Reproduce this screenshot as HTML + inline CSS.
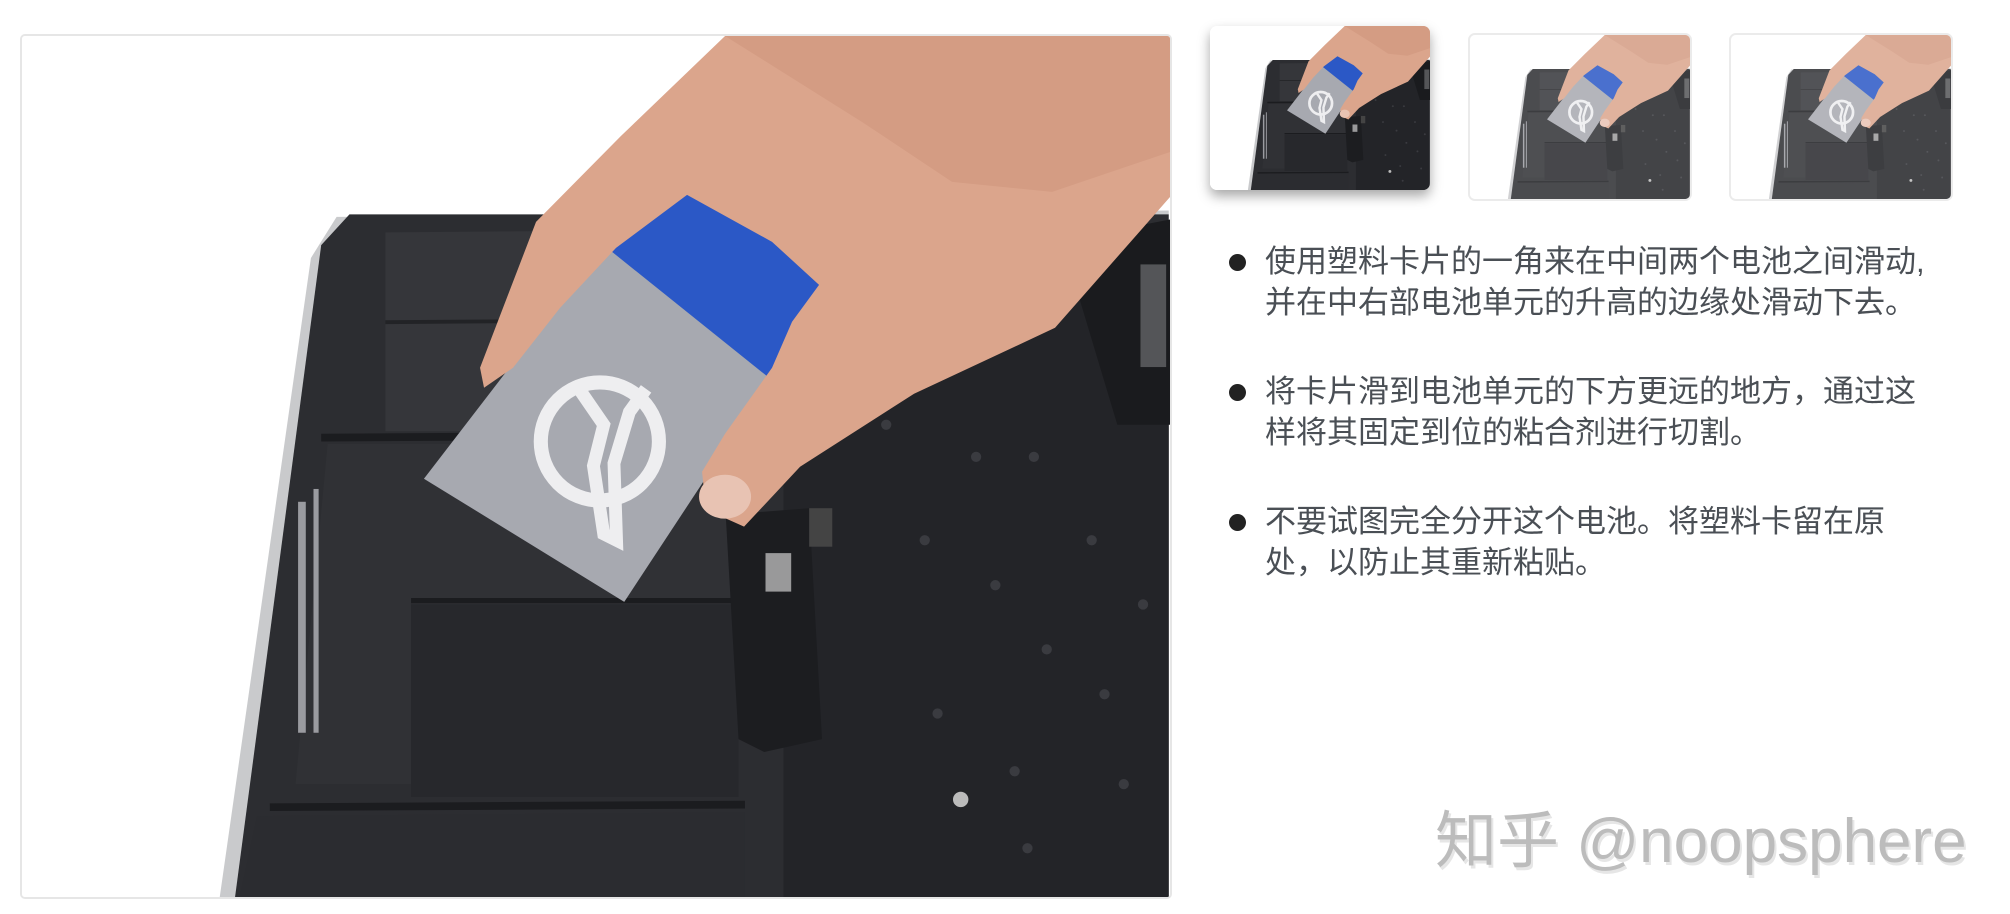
<!DOCTYPE html>
<html><head><meta charset="utf-8"><style>
html,body{margin:0;padding:0;background:#fff;width:2010px;height:914px;overflow:hidden;position:relative;font-family:"Liberation Sans","Noto Sans CJK SC",sans-serif}
.frame{position:absolute;left:20px;top:34px;width:1148px;height:861px;border:2px solid #e6e6e6;border-radius:5px;overflow:hidden;background:#fff}
.thumb{position:absolute;width:220px;height:164px;border-radius:7px;overflow:hidden;background:#fff}
.t1{left:1210px;top:26px;box-shadow:0 6px 12px rgba(0,0,0,.35)}
.t2{left:1468px;top:33px;border:2px solid #e8e8e8;opacity:.85}
.t3{left:1729px;top:33px;border:2px solid #e8e8e8;opacity:.85}
svg{display:block}
ul{position:absolute;left:1265px;top:241px;margin:0;padding:0;list-style:none;color:#4a4f55;font-size:31px;line-height:41px;font-family:"Liberation Sans","Noto Sans CJK SC",sans-serif}
li{position:relative;margin-bottom:48px;white-space:nowrap}
li:before{content:"";position:absolute;left:-36px;top:13px;width:17px;height:17px;border-radius:50%;background:#222}
.wm{position:absolute;left:1435px;top:790px;font-size:62px;color:#bcbcbc;text-shadow:2px 3px 0 #e6e6e6;font-family:"Liberation Sans","Noto Sans CJK SC",sans-serif;white-space:nowrap}
</style></head><body>
<svg width="0" height="0" style="position:absolute">
<defs>
<g id="ph">
<rect x="0" y="0" width="1550" height="705" fill="#fff"/>
<polygon points="262,168 910,163 910,705 170,705 242,200" fill="#c9cacc"/>
<polygon points="272,166 910,166 910,705 182,705 250,190" fill="#2c2d31"/>
<polygon points="300,180 575,178 575,335 300,335" fill="#35363a"/>
<polygon points="255,345 575,345 575,465 320,465 320,610 230,610" fill="#303135"/>
<rect x="320" y="470" width="255" height="150" fill="#27282c"/>
<polygon points="200,635 580,632 580,705 185,705" fill="#2b2c30"/>
<line x1="250" y1="340" x2="575" y2="338" stroke="#1b1c1f" stroke-width="6"/>
<line x1="320" y1="467" x2="575" y2="467" stroke="#1b1c1f" stroke-width="4"/>
<line x1="210" y1="628" x2="580" y2="626" stroke="#1b1c1f" stroke-width="6"/>
<line x1="300" y1="250" x2="575" y2="248" stroke="#222326" stroke-width="3"/>
<polygon points="610,250 860,230 910,260 910,705 610,705" fill="#232428"/>
<polygon points="860,180 911,170 911,330 870,330 840,230" fill="#1a1b1e"/>
<rect x="888" y="205" width="20" height="80" fill="#8e8f92" opacity=".5"/>
<g fill="#3a3b40"><circle cx="690" cy="330" r="4"/><circle cx="760" cy="355" r="4"/><circle cx="805" cy="355" r="4"/><circle cx="720" cy="420" r="4"/><circle cx="775" cy="455" r="4"/><circle cx="850" cy="420" r="4"/><circle cx="815" cy="505" r="4"/><circle cx="730" cy="555" r="4"/><circle cx="860" cy="540" r="4"/><circle cx="790" cy="600" r="4"/><circle cx="875" cy="610" r="4"/><circle cx="800" cy="660" r="4"/><circle cx="890" cy="470" r="4"/></g>
<circle cx="748" cy="622" r="6" fill="#bbb"/>
<polygon points="565,400 630,395 640,575 595,585 575,575" fill="#1c1d20"/>
<rect x="596" y="430" width="20" height="30" fill="#cfcfcf" opacity=".7"/>
<rect x="630" y="395" width="18" height="30" fill="#444"/>
<g fill="#9a9ba0"><rect x="232" y="390" width="6" height="180"/><rect x="244" y="380" width="4" height="190"/></g>
<polygon points="470,190 628,252 486,468 330,372" fill="#a7a9b0"/>
<polygon points="470,190 530,140 650,215 602,296" fill="#2b58c6"/>
<circle cx="467" cy="343" r="46" fill="none" stroke="#eeeef0" stroke-width="11"/>
<path d="M448,298 L470,330 L462,362 L470,415 L480,420 L478,360 L490,320 L503,302" fill="none" stroke="#eeeef0" stroke-width="10"/>
<g transform="translate(17,27) scale(0.7788) translate(-20,-34)">
<path d="M723,34 L1168,34 L1168,195 L1053,326 L912,392 L798,465 L742,525 L704,508 L700,470 L723,432 L770,366 L790,320 L817,283 L770,240 L685,193 L614,246 L558,306 L511,366 L482,386 L478,366 L534,220 L619,134 Z" fill="#dba58c"/>
<path d="M723,34 L1168,34 L1168,150 L1050,190 L950,180 L860,120 Z" fill="#d49c83"/>
<ellipse cx="723" cy="495" rx="26" ry="22" fill="#e8c3b3"/>
</g>
</g>
</defs></svg>

<div class="frame"><svg width="1148" height="861" viewBox="17 27 894 671" preserveAspectRatio="none"><use href="#ph"/></svg></div>
<div class="thumb t1"><svg width="220" height="164" viewBox="17 27 894 671" preserveAspectRatio="none"><use href="#ph"/></svg></div>
<div class="thumb t2"><svg width="220" height="164" viewBox="17 27 894 671" preserveAspectRatio="none"><use href="#ph"/></svg></div>
<div class="thumb t3"><svg width="220" height="164" viewBox="17 27 894 671" preserveAspectRatio="none"><use href="#ph"/></svg></div>

<ul>
<li>使用塑料卡片的一角来在中间两个电池之间滑动,<br>并在中右部电池单元的升高的边缘处滑动下去。</li>
<li>将卡片滑到电池单元的下方更远的地方，通过这<br>样将其固定到位的粘合剂进行切割。</li>
<li>不要试图完全分开这个电池。将塑料卡留在原<br>处，以防止其重新粘贴。</li>
</ul>
<div class="wm">知乎 @noopsphere</div>
</body></html>
